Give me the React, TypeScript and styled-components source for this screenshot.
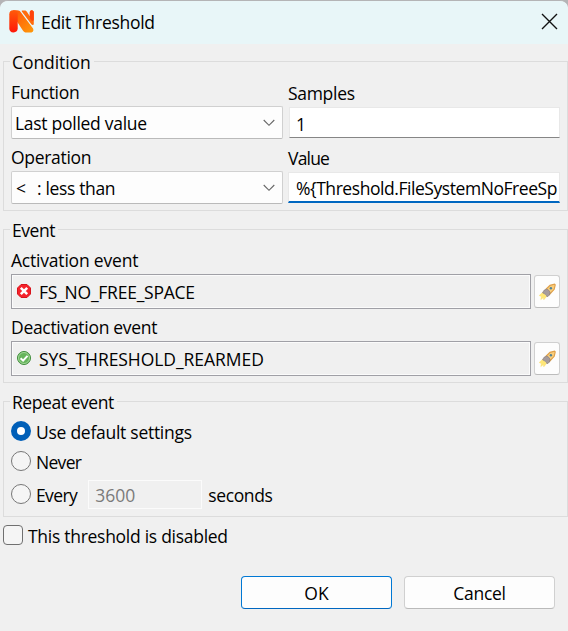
import React from 'react';
import styled, { createGlobalStyle, css } from 'styled-components';

const GlobalStyle = createGlobalStyle`
  * { box-sizing: border-box; }
  body { margin: 0; background: #b4b4b6; overflow: hidden; }
`;

const Dialog = styled.main`
  display: flex;
  flex-direction: column;
  height: 631px;
  width: 568px;
  border-top: 1px solid #b4b4b6;
  border-radius: 8px 8px 0 0;
  background: #f0f0f0;
  overflow: hidden;
  color: #000;
  font: 17.5px/24px 'Open Sans', 'Noto Sans', sans-serif;
`;

const TitleBar = styled.header`
  display: flex;
  align-items: center;
  flex: none;
  height: 43px;
  padding: 0 10px 2px 9px;
  background: #e8f6f8;
`;

const Text = styled.span<{ $track?: number }>`
  letter-spacing: ${p => p.$track ?? 0}px;
  white-space: pre;
`;

const Title = styled(Text)`
  flex: 1;
  margin-left: 6px;
`;

const IconButton = styled.button`
  display: flex;
  padding: 0;
  border: 0;
  background: none;
`;

const Group = styled.section<{ $top: number; $height: number }>`
  display: flex;
  flex-direction: column;
  flex: none;
  width: 565px;
  height: ${p => p.$height}px;
  margin: ${p => p.$top}px 0 0 3px;
  padding: 0 7px;
  border: 1px solid #dcdcdc;
`;

const Legend = styled(Text)`
  align-self: flex-start;
  height: 24px;
  margin: -12px 0 0 -1px;
  padding: 0 3px 0 2px;
  background: #f0f0f0;
`;

const Columns = styled.div`
  display: grid;
  grid-template-columns: 272px 272px;
  column-gap: 5px;
`;

const Field = styled.div<{ $top?: number }>`
  display: flex;
  flex-direction: column;
  padding-top: ${p => p.$top ?? 0}px;
`;

const Select = styled.div`
  display: flex;
  align-items: center;
  justify-content: space-between;
  height: 33px;
  margin-top: 2px;
  padding: 0 7px 0 3px;
  border: 1px solid #d0d0d0;
  border-bottom-color: #bababa;
  border-radius: 2px;
  background: #fdfdfd;
`;

const Operator = styled.span`
  display: flex;
  gap: 11px;
  padding-left: 1px;
`;

const TextBox = styled.div<{ $focused?: boolean }>`
  display: flex;
  align-items: center;
  height: 31px;
  width: 271px;
  margin: 2px 0 0 1px;
  padding: 2px 2px 0 6px;
  overflow: hidden;
  border: 1px solid #e8e8e8;
  border-bottom: 1px solid #868686;
  background: #fff;
  ${p => p.$focused && css`
    width: 272px;
    margin-left: 0;
    padding-left: 7px;
    border-bottom: 2px solid #0067c0;
  `}
`;

const EventRow = styled.div`
  display: flex;
  align-items: center;
  gap: 3px;
  height: 35px;
  margin-top: 2px;
`;

const EventBox = styled.div`
  display: flex;
  align-items: center;
  width: 520px;
  height: 35px;
  padding: 1px 0 0 4px;
  border: 1px solid #a0a0a6;
  box-shadow: inset 0 0 0 1px #fbfbfb;

  svg { margin: -2px 7px 0 0; }
`;

const PickButton = styled.button`
  display: flex;
  align-items: center;
  justify-content: center;
  width: 26px;
  height: 33px;
  padding: 0;
  border: 1px solid #d0d0d0;
  border-bottom-color: #bcbcbc;
  border-radius: 3px;
  background: #fdfdfd;
`;

const RadioRow = styled.label<{ $height: number }>`
  display: flex;
  align-items: center;
  height: ${p => p.$height}px;
`;

const RadioDot = styled.span<{ $checked?: boolean }>`
  width: 20px;
  height: 20px;
  margin: 0 5px 3px 0;
  border: ${p => (p.$checked ? '6px solid #005fb8' : '1px solid #777')};
  border-radius: 50%;
  background: ${p => (p.$checked ? '#fff' : '#f5f5f5')};
`;

const Seconds = styled.div`
  display: flex;
  align-items: center;
  width: 114px;
  height: 29px;
  margin: 0 6px 2px 11px;
  padding: 2px 0 0 6px;
  border: 1px solid #fbfbfb;
  color: #7b7b7b;
`;

const CheckRow = styled.label`
  display: flex;
  align-items: center;
  height: 24px;
  margin: 7px 0 0 3px;
`;

const CheckBox = styled.span`
  width: 20px;
  height: 20px;
  margin: 0 5px 2px 0;
  border: 1px solid #707070;
  border-radius: 4px;
  background: #f5f5f5;
`;

const Footer = styled.footer`
  display: flex;
  gap: 12px;
  margin: 28px 0 0 241px;
`;

const Button = styled.button<{ $primary?: boolean }>`
  width: 151px;
  height: 33px;
  padding: 1px 0 0;
  border: 1px solid ${p => (p.$primary ? '#0078d4' : '#d0d0d0')};
  border-bottom-color: ${p => (p.$primary ? '#0067c0' : '#bababa')};
  border-radius: 4px;
  background: #fdfdfd;
  color: #000;
  font: inherit;
`;

const Logo = () => (
  <svg width="26" height="23" viewBox="0 0 26 23">
    <defs>
      <linearGradient id="leg" x1="0" y1="0" x2="0" y2="1">
        <stop offset="0" stopColor="#ff5a0a" />
        <stop offset="1" stopColor="#ff1608" />
      </linearGradient>
      <linearGradient id="bar" x1="0" y1="0" x2="1" y2="1">
        <stop offset="0" stopColor="#ff5208" />
        <stop offset="1" stopColor="#ff9a0a" />
      </linearGradient>
    </defs>
    <path d="M4 .3h4c2 0 3 .8 4 2.200L23.700 18c1.500 2.200.5 4.500-2 4.500h-4c-2 0-3-.8-4-2.300L8 11.500z" fill="url(#bar)" />
    <path d="M4 .3h.8C7.300.3 8.700 2 8.700 4.300v14c0 2.300-1.400 4.200-4.200 4.200S.3 20.800.3 18.500V4.300C.3 1.800 1.700.3 4 .3z" fill="url(#leg)" />
    <path d="M12.200.2L23.500 16" fill="none" stroke="#e8f6f8" strokeWidth="1.300" />
    <path d="M13.400.4h2.200c1 0 1.700.5 2.300 1.400l2.900 4.400V2.600c0-1.400.7-2.300 1.900-2.300s2.100.9 2.100 2.300v10.800c0 1.800-1.500 2.200-2.600.7L13 1.700c-.5-.8-.4-1.300.4-1.300z" fill="#ff6c0c" />
    <path d="M20.800 2.600c0-1.400.7-2.300 1.900-2.300s2.100.9 2.100 2.300v7c0 1-.8 1.500-1.800 1.200-1.300-.4-2.200-2-2.200-4.200z" fill="#ff430c" />
  </svg>
);

const Chevron = () => (
  <svg width="12" height="8" viewBox="0 0 12 8">
    <path d="M.7 1l5.300 5.300L11.300 1" fill="none" stroke="#666" strokeWidth="1.100" />
  </svg>
);

const CriticalIcon = () => (
  <svg width="16" height="16" viewBox="0 0 16 16">
    <path d="M5 1.500h6L14.500 5v6L11 14.500H5L1.500 11V5z" fill="#f5222b" stroke="#d8141c" strokeLinejoin="round" />
    <path d="M4.800 4.800l6.400 6.400M11.200 4.800l-6.400 6.400" stroke="#fff" strokeWidth="2.500" />
  </svg>
);

const NormalIcon = () => (
  <svg width="16" height="16" viewBox="0 0 16 16">
    <circle cx="8" cy="8" r="6.500" fill="#66b55c" stroke="#3f8b3b" />
    <circle cx="8" cy="8" r="5.500" fill="none" stroke="#a2d698" />
    <path d="M4.600 8.200l2.500 2.400 4.400-4.700" fill="none" stroke="#fff" strokeWidth="2" />
  </svg>
);

const RocketIcon = () => (
  <svg width="18" height="18" viewBox="0 0 18 18">
    <path d="M1.200 12.500l3.600-3.300 4 4-3 3.600-.4-2.200-2.600 2 .6-3z" fill="#ffe777" stroke="#f8dc6c" strokeWidth=".5" />
    <path d="M8 6.300L12 2.400l4.600-1.300.6.8-1 4.400-4.600 4.900z" fill="#f9ce7c" stroke="#dfa04a" strokeWidth="1.200" />
    <path d="M4.600 9.800L6 7.300l2.800-1.200 2.100 1.300 1.200 2.200-.7 2.600-2.400 1.600-1-2.200z" fill="#a69c9c" stroke="#8b8080" strokeWidth=".7" />
    <circle cx="12.900" cy="5.200" r="1.200" fill="#4f8299" />
  </svg>
);

export default function App() {
  return (
    <>
      <GlobalStyle />
      <Dialog>
        <TitleBar>
          <Logo />
          <Title $track={-0.28}>Edit Threshold</Title>
          <IconButton aria-label="Close">
            <svg width="17" height="17" viewBox="0 0 17 17">
              <path d="M1 1l15 15M16 1L1 16" stroke="#111" strokeWidth="1.400" />
            </svg>
          </IconButton>
        </TitleBar>

        <Group $top={17} $height={150}>
          <Legend $track={-0.08}>Condition</Legend>
          <Columns>
            <Field $top={6}>
              <Text $track={-0.3}>Function</Text>
              <Select>
                <Text $track={-0.28}>Last polled value</Text>
                <Chevron />
              </Select>
            </Field>
            <Field $top={7}>
              <Text $track={-0.3}>Samples</Text>
              <TextBox>1</TextBox>
            </Field>
            <Field $top={6}>
              <Text $track={-0.3}>Operation</Text>
              <Select>
                <Operator>
                  <Text>&lt;</Text>
                  <Text $track={-0.35}>: less than</Text>
                </Operator>
                <Chevron />
              </Select>
            </Field>
            <Field $top={7}>
              <Text $track={-0.8}>Value</Text>
              <TextBox $focused>
                <Text $track={-0.44}>{'%{Threshold.FileSystemNoFreeSp'}</Text>
              </TextBox>
            </Field>
          </Columns>
        </Group>

        <Group $top={18} $height={154}>
          <Legend $track={-0.45}>Event</Legend>
          <Field $top={6}>
            <Text $track={-0.2}>Activation event</Text>
            <EventRow>
              <EventBox>
                <CriticalIcon />
                <Text $track={-0.24}>FS_NO_FREE_SPACE</Text>
              </EventBox>
              <PickButton aria-label="Select activation event"><RocketIcon /></PickButton>
            </EventRow>
          </Field>
          <Field $top={6}>
            <Text $track={-0.3}>Deactivation event</Text>
            <EventRow>
              <EventBox>
                <NormalIcon />
                <Text $track={-0.05}>SYS_THRESHOLD_REARMED</Text>
              </EventBox>
              <PickButton aria-label="Select deactivation event"><RocketIcon /></PickButton>
            </EventRow>
          </Field>
        </Group>

        <Group $top={18} $height={116}>
          <Legend $track={-0.43}>Repeat event</Legend>
          <Field $top={3}>
            <RadioRow $height={30}>
              <RadioDot $checked />
              <Text $track={-0.27}>Use default settings</Text>
            </RadioRow>
            <RadioRow $height={30}>
              <RadioDot />
              <Text $track={-0.7}>Never</Text>
            </RadioRow>
            <RadioRow $height={36}>
              <RadioDot />
              <Text $track={-0.6}>Every</Text>
              <Seconds>3600</Seconds>
              <Text $track={-0.38}>seconds</Text>
            </RadioRow>
          </Field>
        </Group>

        <CheckRow>
          <CheckBox />
          <Text $track={-0.28}>This threshold is disabled</Text>
        </CheckRow>

        <Footer>
          <Button $primary>OK</Button>
          <Button><Text $track={-0.3}>Cancel</Text></Button>
        </Footer>
      </Dialog>
    </>
  );
}
